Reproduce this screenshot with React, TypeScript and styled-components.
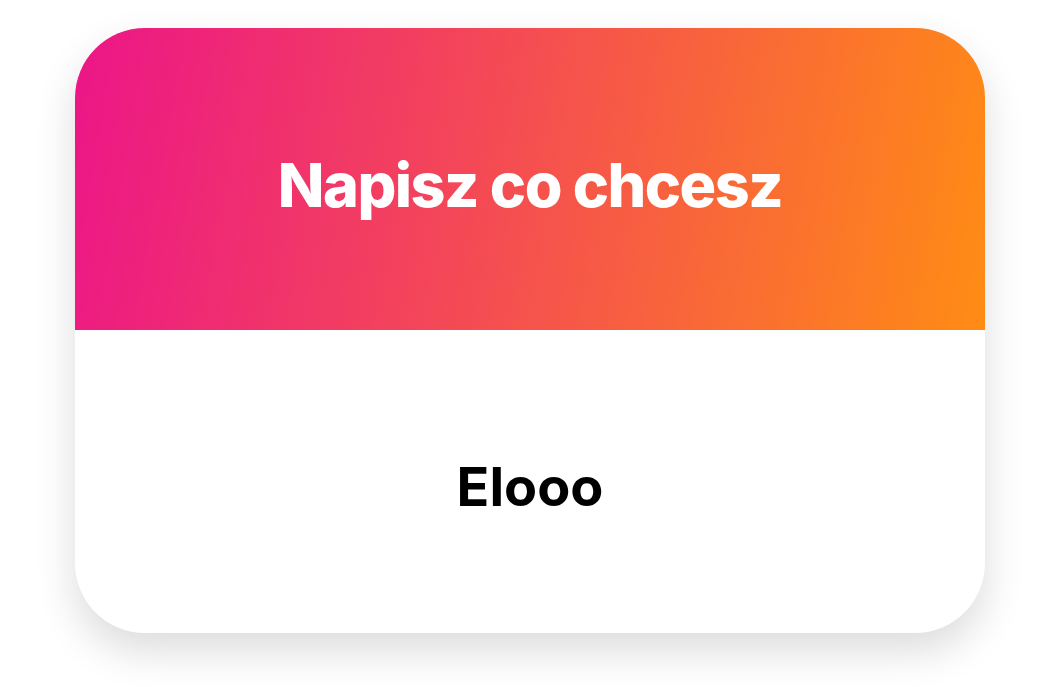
import styled, { createGlobalStyle } from 'styled-components';

const GlobalStyle = createGlobalStyle`
  body {
    margin: 0;
    background: #ffffff;
    font-family: Inter, "Noto Sans", sans-serif;
  }
`;

const Page = styled.div`
  display: flex;
  justify-content: center;
  padding-top: 28px;
  height: 687px;
  box-sizing: border-box;
`;

const Card = styled.div`
  display: flex;
  flex-direction: column;
  width: 910px;
  height: 605px;
  border-radius: 70px;
  overflow: hidden;
  background: #ffffff;
  box-shadow: 0 18px 40px rgba(0, 0, 0, 0.14);
`;

const Header = styled.div`
  display: flex;
  align-items: center;
  justify-content: center;
  height: 302px;
  padding-top: 12px;
  box-sizing: border-box;
  background: linear-gradient(100deg, #ec1588 0%, #f5504f 50%, #ff8c14 100%);
`;

const Title = styled.h1`
  margin: 0;
  color: #ffffff;
  font-family: Inter, sans-serif;
  font-weight: 800;
  font-size: 61px;
  letter-spacing: -1.5px;
`;

const Body = styled.div`
  display: flex;
  flex: 1;
  align-items: center;
  justify-content: center;
  padding-top: 10px;
`;

const Message = styled.p`
  margin: 0;
  color: #000000;
  font-family: Inter, sans-serif;
  font-weight: 700;
  font-size: 54px;
`;

export default function App() {
  return (
    <>
      <GlobalStyle />
      <Page>
        <Card>
          <Header>
            <Title>Napisz co chcesz</Title>
          </Header>
          <Body>
            <Message>Elooo</Message>
          </Body>
        </Card>
      </Page>
    </>
  );
}
